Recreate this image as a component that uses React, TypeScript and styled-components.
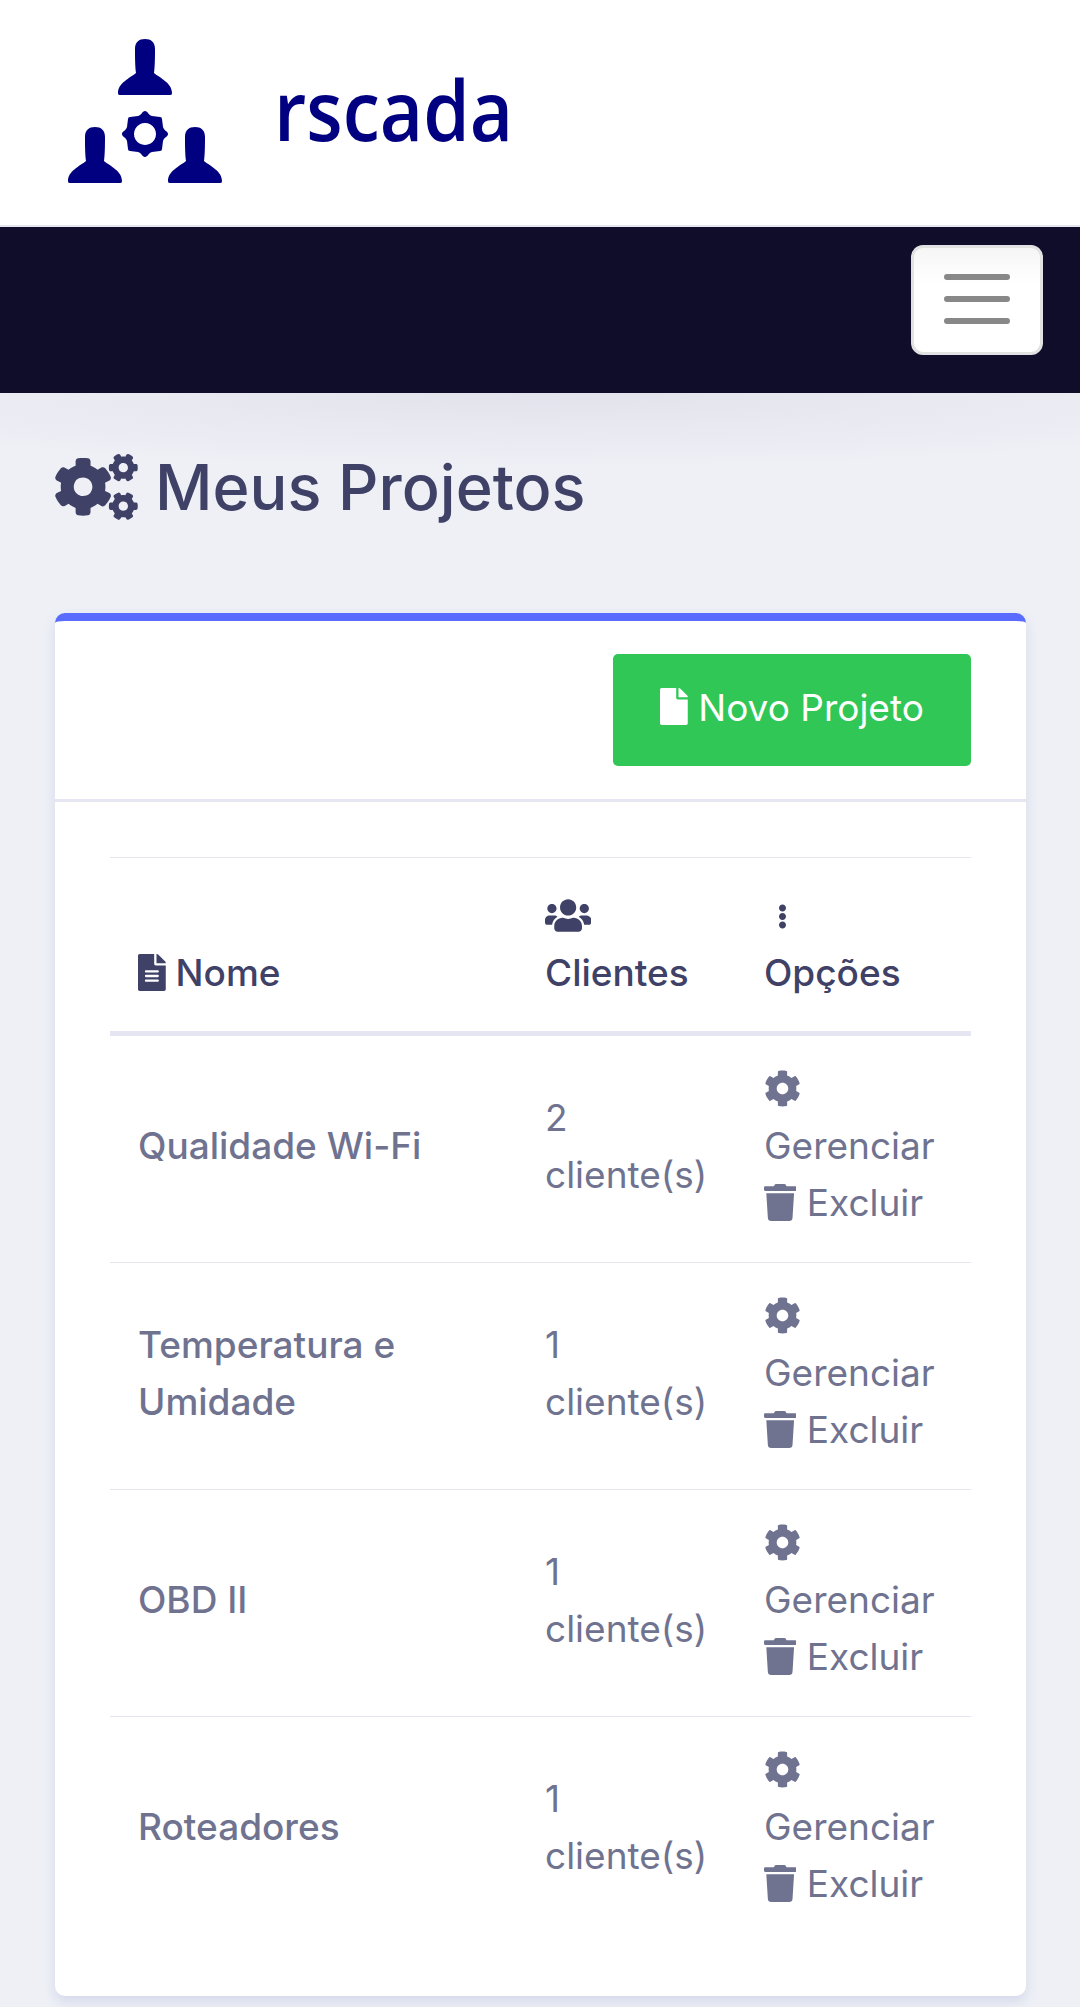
import React from 'react'
import styled, { createGlobalStyle } from 'styled-components'
import { FaCog, FaCogs, FaEllipsisV, FaFile, FaFileAlt, FaTrash, FaUsers } from 'react-icons/fa'

const projects = [
  { name: 'Qualidade Wi-Fi', clients: 2 },
  { name: 'Temperatura e Umidade', clients: 1 },
  { name: 'OBD II', clients: 1 },
  { name: 'Roteadores', clients: 1 },
]

const Person = ({ x, y }: { x: number; y: number }) => (
  <path
    transform={`translate(${x} ${y})`}
    d="M27 0c6 0 10 3 10 10 0 6 0 17-1 24 6 5 18 10 18 20 0 2-1 2-3 2H3c-2 0-3 0-3-2 0-10 12-15 18-20-1-7-1-18-1-24C17 3 21 0 27 0z"
  />
)

const Logo = () => (
  <LogoSvg viewBox="0 0 154 144" fill="#000080">
    <Person x={50} y={0} />
    <Person x={0} y={88} />
    <Person x={100} y={88} />
    <path
      transform="translate(77 95)"
      fillRule="evenodd"
      d="M0-23C3-23 3-19 7-18L15-17Q17-17 17-15L18-7C19-3 23-3 23 0 23 3 19 3 18 7L17 15Q17 17 15 17L7 18C3 19 3 23 0 23-3 23-3 19-7 18L-15 17Q-17 17-17 15L-18 7C-19 3-23 3-23 0-23-3-19-3-18-7L-17-15Q-17-17-15-17L-7-18C-3-19-3-23 0-23ZM0-11A11 11 0 1 0 .01-11Z"
    />
  </LogoSvg>
)

const App = () => {
  return (
    <Page>
      <GlobalStyle />
      <Brand>
        <Logo />
        <BrandName>rscada</BrandName>
      </Brand>
      <Navbar>
        <Toggler aria-label="menu">
          <TogglerLine />
          <TogglerLine />
          <TogglerLine />
        </Toggler>
      </Navbar>
      <Content>
        <Title>
          <FaCogs />
          Meus Projetos
        </Title>
        <Card>
          <CardHeader>
            <NewButton>
              <FileIcon /> Novo Projeto
            </NewButton>
          </CardHeader>
          <CardBody>
            <Table>
              <colgroup>
                <col style={{ width: 407 }} />
                <col style={{ width: 219 }} />
                <col style={{ width: 235 }} />
              </colgroup>
              <thead>
                <tr>
                  <Th>
                    <FileAltIcon /> Nome
                  </Th>
                  <Th>
                    <UsersIcon />
                    <br />
                    Clientes
                  </Th>
                  <Th>
                    <DotsIcon />
                    <br />
                    Opções
                  </Th>
                </tr>
              </thead>
              <tbody>
                {projects.map((p) => (
                  <tr key={p.name}>
                    <NameCell>{p.name}</NameCell>
                    <Td>
                      {p.clients}
                      <br />
                      cliente(s)
                    </Td>
                    <Td>
                      <GearIcon />
                      <br />
                      Gerenciar
                      <br />
                      <TrashIcon /> Excluir
                    </Td>
                  </tr>
                ))}
              </tbody>
            </Table>
          </CardBody>
        </Card>
      </Content>
    </Page>
  )
}

export default App

const GlobalStyle = createGlobalStyle`
html, body {
  margin: 0;
  padding: 0;
  background: #eef0f6;
}
`
const Page = styled.div`
width: 1080px;
height: 2007px;
overflow: hidden;
font-family: Inter, "Liberation Sans", sans-serif;
font-size: 37px;
line-height: 57px;
color: #6f7390;
`
const Brand = styled.div`
height: 227px;
background: #fff;
display: flex;
align-items: flex-start;
padding: 39px 0 0 68px;
box-sizing: border-box;
border-bottom: 2px solid #e5e6f2;
`
const LogoSvg = styled.svg`
width: 154px;
height: 144px;
`
const BrandName = styled.div`
font-family: "Open Sans", sans-serif;
font-weight: 600;
font-size: 84px;
line-height: 100px;
color: #000080;
margin: 20px 0 0 52px;
transform: scaleX(0.89);
transform-origin: left center;
`
const Navbar = styled.div`
height: 166px;
background: #0f0d2a;
display: flex;
justify-content: flex-end;
padding: 18px 37px 0 0;
box-sizing: border-box;
`
const Toggler = styled.button`
width: 132px;
height: 110px;
background: linear-gradient(#f6f6f6, #fff 35%);
border: 3px solid #e2e2e2;
border-radius: 12px;
display: flex;
flex-direction: column;
align-items: center;
gap: 16px;
padding: 26px 0 0;
box-sizing: border-box;
`
const TogglerLine = styled.span`
width: 66px;
height: 6px;
border-radius: 3px;
background: #888;
`
const Content = styled.div`
padding: 0 54px 0 55px;
background: radial-gradient(ellipse 800px 75px at 50% 0, #e2e2ec, #eef0f6);
background-repeat: no-repeat;
background-size: 100% 80px;
`
const Title = styled.h1`
margin: 0;
padding-top: 56px;
height: 220px;
box-sizing: border-box;
display: flex;
align-items: flex-start;
gap: 17px;
font-size: 63px;
line-height: 76px;
font-weight: 500;
color: #3f4166;
svg {
  width: 83px;
  height: 66px;
  margin-top: 5px;
}
`
const Card = styled.div`
background: #fff;
border-top: 8px solid #5a6cff;
border-radius: 10px;
height: 1383px;
box-sizing: border-box;
box-shadow: 0 6px 12px rgba(120, 125, 190, 0.2);
`
const CardHeader = styled.div`
height: 181px;
padding: 33px 55px 0 0;
box-sizing: border-box;
display: flex;
justify-content: flex-end;
border-bottom: 3px solid #e5e6f2;
`
const NewButton = styled.button`
width: 358px;
height: 112px;
padding: 0 0 5px;
background: #30c756;
border: 0;
border-radius: 5px;
color: #fff;
font: inherit;
`
const CardBody = styled.div`
padding: 55px;
`
const Table = styled.table`
width: 861px;
table-layout: fixed;
border-collapse: collapse;
svg {
  height: 1em;
  vertical-align: -0.125em;
}
`
const Th = styled.th`
padding: 29px 28px 30px;
text-align: left;
font-weight: 500;
color: #3f4166;
vertical-align: bottom;
border-top: 1px solid #e5e6f2;
border-bottom: 5px solid #e5e6f2;
`
const FileIcon = styled(FaFile)`
width: 0.75em;
height: 1.05em;
vertical-align: -0.125em;
`
const FileAltIcon = styled(FaFileAlt)`
width: 0.75em;
`
const UsersIcon = styled(FaUsers)`
width: 1.25em;
`
const DotsIcon = styled(FaEllipsisV)`
&& {
  height: 25px;
  width: 37px;
  vertical-align: 0;
}
`
const GearIcon = styled(FaCog)`
width: 1em;
`
const TrashIcon = styled(FaTrash)`
width: 0.875em;
`
const Td = styled.td`
padding: 24px 28px 31px;
vertical-align: middle;
border-top: 1px solid #e5e6f2;
`
const NameCell = styled(Td)`
font-weight: 500;
`
